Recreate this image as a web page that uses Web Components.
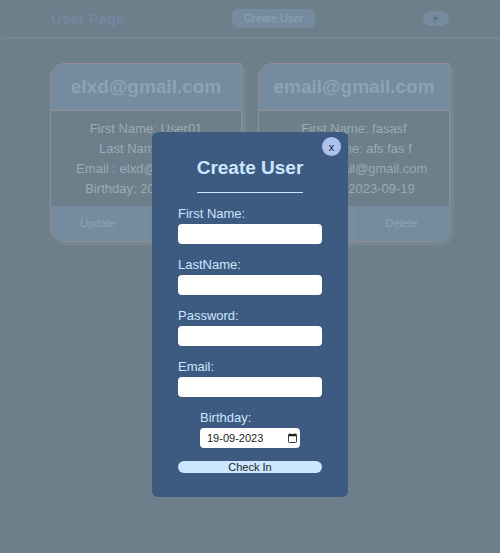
<!DOCTYPE html>
<html lang="en">
<head>
<meta charset="utf-8">
<meta name="viewport" content="width=device-width, initial-scale=1">
<title>User Page</title>
<style>
  :root {
    --page: #6c7f8b;
    --panel: #758b9f;
    --line: #938e93;
    --glow: #758893;
    --heading: #8ba4b5;
    --text: #9aabb5;
    --brand: #7288a0;
    --modal: #3d5a80;
    --ice: #cce6ff;
  }
  body {
    margin: 0;
    min-height: 100vh;
    background: var(--page);
    color: var(--text);
    font: 13px/20px "Liberation Sans", Arial, sans-serif;
  }
</style>
</head>
<body>
<user-app></user-app>

<template id="t-app">
  <style>
    :host { display: block; }
    main {
      display: grid;
      grid-template-columns: repeat(auto-fit, minmax(180px, 1fr));
      gap: 16px;
      padding: 26px 50px;
    }
  </style>
  <page-header>User Page</page-header>
  <main>
    <user-card email="elxd@gmail.com" first="User01" last="elxd" birthday="2023-09-19"></user-card>
    <user-card email="email@gmail.com" first="fasasf" last="afs fas f" birthday="2023-09-19"></user-card>
  </main>
  <user-modal></user-modal>
</template>

<template id="t-header">
  <style>
    :host {
      display: flex;
      align-items: center;
      justify-content: space-between;
      height: 37px;
      padding: 0 51px;
      box-shadow: 0 3px 2px var(--glow);
    }
    h1 { margin: 0; font-size: 15px; line-height: 20px; color: var(--brand); }
    button { border: 0; background: var(--panel); color: var(--heading); font: 11px/19px "Liberation Sans", Arial, sans-serif; }
    .create { padding: 0 12px; border-radius: 6px; }
    .theme { display: flex; align-items: center; justify-content: center; width: 26px; height: 15px; padding: 0; border-radius: 8px; color: #62717f; }
  </style>
  <h1><slot></slot></h1>
  <button class="create" type="button">Create User</button>
  <button class="theme" type="button" aria-label="Toggle theme">
    <svg width="9" height="9" viewBox="0 0 9 9" aria-hidden="true">
      <circle cx="4.5" cy="4.5" r="2.1" fill="currentColor"/>
      <path d="M4.5 .3v1M4.5 7.7v1M.3 4.5h1M7.7 4.5h1M1.5 1.5l.7.7M6.8 6.8l.7.7M1.5 7.5l.7-.7M6.8 2.2l.7-.7" stroke="currentColor" stroke-width=".9"/>
    </svg>
  </button>
</template>

<template id="t-card">
  <style>
    :host {
      display: block;
      overflow: hidden;
      border: 1px solid var(--line);
      border-radius: 14px 0 14px 14px;
      box-shadow: 4px 4px 2px var(--glow);
      text-align: center;
      white-space: nowrap;
    }
    h2 {
      margin: 0;
      background: var(--panel);
      border-bottom: 1px solid var(--line);
      color: var(--heading);
      font-size: 19px;
      line-height: 46px;
    }
    .info { padding: 8px 0 7px; }
    p { margin: 0; }
    .actions { display: grid; grid-template-columns: 1fr 1fr; }
    button {
      height: 35px;
      padding: 0;
      border: 0;
      background: var(--panel);
      color: var(--heading);
      font: 11px/15px "Liberation Sans", Arial, sans-serif;
    }
    button:first-child { border-right: 1px solid var(--line); }
  </style>
  <h2></h2>
  <div class="info">
    <p>First Name: <span data-f="first"></span></p>
    <p>Last Name: <span data-f="last"></span></p>
    <p>Email : <span data-f="email"></span></p>
    <p>Birthday: <span data-f="birthday"></span></p>
  </div>
  <div class="actions">
    <button type="button">Update</button>
    <button type="button">Delete</button>
  </div>
</template>

<template id="t-field">
  <style>
    :host { display: flex; flex-direction: column; gap: 3px; }
    :host([type="date"]) { align-self: center; width: 100px; }
    label { line-height: 15px; }
    .box { display: flex; align-items: center; height: 20px; padding: 0 3px 0 7px; border-radius: 4px; background: #fff; }
    input { flex: 1; min-width: 0; height: 100%; padding: 0; border: 0; outline: 0; background: none; color: #222; font: 11px/20px "Liberation Sans", Arial, sans-serif; }
    button { display: flex; padding: 0; border: 0; background: none; color: #222; }
    :host(:not([type="date"])) button { display: none; }
  </style>
  <label for="control"></label>
  <div class="box">
    <input id="control">
    <button type="button" aria-label="Open calendar">
      <svg width="9" height="10" viewBox="0 0 9 10" aria-hidden="true">
        <rect x=".5" y="1.5" width="8" height="8" rx=".8" fill="none" stroke="currentColor" stroke-width=".9"/>
        <path d="M.5 1h8v2.3h-8zM1.5 .2h1v1h-1zM6.5 .2h1v1h-1z" fill="currentColor"/>
      </svg>
    </button>
  </div>
</template>

<template id="t-modal">
  <style>
    :host {
      position: fixed;
      inset: 0;
      display: flex;
      align-items: flex-start;
      justify-content: center;
      padding-top: 132px;
      color: var(--ice);
    }
    section {
      position: relative;
      display: flex;
      flex-direction: column;
      gap: 13px;
      box-sizing: border-box;
      width: 196px;
      padding: 24px 26px;
      border-radius: 6px;
      background: var(--modal);
    }
    h2 {
      align-self: center;
      margin: 0;
      padding-bottom: 12px;
      border-bottom: 1px solid var(--ice);
      font-size: 19px;
      line-height: 24px;
      white-space: nowrap;
    }
    form { display: flex; flex-direction: column; gap: 13px; }
    button { padding: 0; border: 0; color: #222; font: 11px/12px "Liberation Sans", Arial, sans-serif; }
    .close { position: absolute; top: 5px; right: 7px; width: 19px; height: 19px; border-radius: 50%; background: #adc2f0; }
    .submit { height: 12px; border-radius: 6px; background: var(--ice); }
  </style>
  <section role="dialog" aria-labelledby="title">
    <button class="close" type="button" aria-label="Close">x</button>
    <h2 id="title">Create User</h2>
    <form>
      <form-field label="First Name:"></form-field>
      <form-field label="LastName:"></form-field>
      <form-field label="Password:" type="password"></form-field>
      <form-field label="Email:" type="email"></form-field>
      <form-field label="Birthday:" type="date" value="19-09-2023"></form-field>
      <button class="submit" type="submit">Check In</button>
    </form>
  </section>
</template>

<script>
  class BaseElement extends HTMLElement {
    constructor() {
      super();
      const template = document.getElementById(this.constructor.template);
      this.attachShadow({ mode: "open" }).append(template.content.cloneNode(true));
    }
  }

  class PageHeader extends BaseElement { static template = "t-header"; }

  class UserCard extends BaseElement {
    static template = "t-card";
    connectedCallback() {
      this.shadowRoot.querySelector("h2").textContent = this.getAttribute("email");
      for (const span of this.shadowRoot.querySelectorAll("[data-f]")) {
        span.textContent = this.getAttribute(span.dataset.f);
      }
    }
  }

  class FormField extends BaseElement {
    static template = "t-field";
    connectedCallback() {
      const input = this.shadowRoot.querySelector("input");
      const type = this.getAttribute("type") || "text";
      this.shadowRoot.querySelector("label").textContent = this.getAttribute("label");
      input.type = type === "date" ? "text" : type;
      input.value = this.getAttribute("value") || "";
    }
  }

  class UserModal extends BaseElement {
    static template = "t-modal";
    connectedCallback() {
      this.shadowRoot.querySelector(".close").onclick = () => this.remove();
      this.shadowRoot.querySelector("form").onsubmit = (event) => event.preventDefault();
    }
  }

  class UserApp extends BaseElement { static template = "t-app"; }

  customElements.define("page-header", PageHeader);
  customElements.define("user-card", UserCard);
  customElements.define("form-field", FormField);
  customElements.define("user-modal", UserModal);
  customElements.define("user-app", UserApp);
</script>
</body>
</html>
